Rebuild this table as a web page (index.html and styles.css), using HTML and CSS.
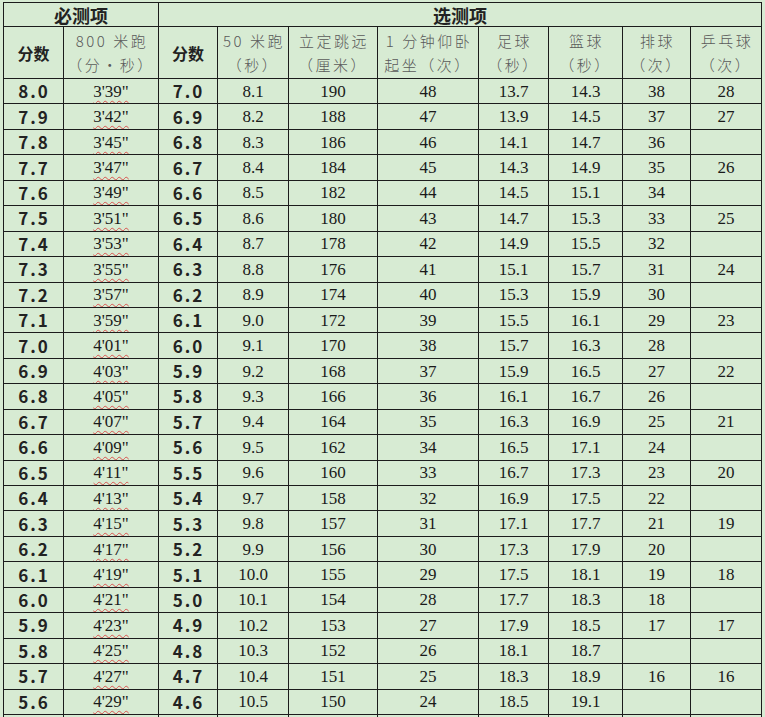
FILE: index.html
```html
<!DOCTYPE html>
<html lang="zh-CN">
<head>
<meta charset="utf-8">
<link rel="stylesheet" href="styles.css">
</head>
<body>
<table class="grid">
<colgroup>
<col class="c1"><col class="c2"><col class="c3"><col class="c4"><col class="c5"><col class="c6"><col class="c7"><col class="c8"><col class="c9"><col class="c10">
</colgroup>
<tr class="h1"><th colspan="2" class="grp">必测项</th><th colspan="8" class="grp">选测项</th></tr>
<tr class="h2">
<th class="sc">分数</th><th class="sub">800 米跑<br>（分•秒）</th>
<th class="sc">分数</th><th class="sub">50 米跑<br>（秒）</th><th class="sub">立定跳远<br>（厘米）</th><th class="sub">1 分钟仰卧<br>起坐（次）</th><th class="sub">足球<br>（秒）</th><th class="sub">篮球<br>（秒）</th><th class="sub">排球<br>（次）</th><th class="sub">乒乓球<br>（次）</th>
</tr>
<tr><td class="s">8.0</td><td><span class="sp">3'39"</span></td><td class="s">7.0</td><td>8.1</td><td>190</td><td>48</td><td>13.7</td><td>14.3</td><td>38</td><td>28</td></tr>
<tr><td class="s">7.9</td><td><span class="sp">3'42"</span></td><td class="s">6.9</td><td>8.2</td><td>188</td><td>47</td><td>13.9</td><td>14.5</td><td>37</td><td>27</td></tr>
<tr><td class="s">7.8</td><td><span class="sp">3'45"</span></td><td class="s">6.8</td><td>8.3</td><td>186</td><td>46</td><td>14.1</td><td>14.7</td><td>36</td><td></td></tr>
<tr><td class="s">7.7</td><td><span class="sp">3'47"</span></td><td class="s">6.7</td><td>8.4</td><td>184</td><td>45</td><td>14.3</td><td>14.9</td><td>35</td><td>26</td></tr>
<tr><td class="s">7.6</td><td><span class="sp">3'49"</span></td><td class="s">6.6</td><td>8.5</td><td>182</td><td>44</td><td>14.5</td><td>15.1</td><td>34</td><td></td></tr>
<tr><td class="s">7.5</td><td><span class="sp">3'51"</span></td><td class="s">6.5</td><td>8.6</td><td>180</td><td>43</td><td>14.7</td><td>15.3</td><td>33</td><td>25</td></tr>
<tr><td class="s">7.4</td><td><span class="sp">3'53"</span></td><td class="s">6.4</td><td>8.7</td><td>178</td><td>42</td><td>14.9</td><td>15.5</td><td>32</td><td></td></tr>
<tr><td class="s">7.3</td><td><span class="sp">3'55"</span></td><td class="s">6.3</td><td>8.8</td><td>176</td><td>41</td><td>15.1</td><td>15.7</td><td>31</td><td>24</td></tr>
<tr><td class="s">7.2</td><td><span class="sp">3'57"</span></td><td class="s">6.2</td><td>8.9</td><td>174</td><td>40</td><td>15.3</td><td>15.9</td><td>30</td><td></td></tr>
<tr><td class="s">7.1</td><td><span class="sp">3'59"</span></td><td class="s">6.1</td><td>9.0</td><td>172</td><td>39</td><td>15.5</td><td>16.1</td><td>29</td><td>23</td></tr>
<tr><td class="s">7.0</td><td><span class="sp">4'01"</span></td><td class="s">6.0</td><td>9.1</td><td>170</td><td>38</td><td>15.7</td><td>16.3</td><td>28</td><td></td></tr>
<tr><td class="s">6.9</td><td><span class="sp">4'03"</span></td><td class="s">5.9</td><td>9.2</td><td>168</td><td>37</td><td>15.9</td><td>16.5</td><td>27</td><td>22</td></tr>
<tr><td class="s">6.8</td><td><span class="sp">4'05"</span></td><td class="s">5.8</td><td>9.3</td><td>166</td><td>36</td><td>16.1</td><td>16.7</td><td>26</td><td></td></tr>
<tr><td class="s">6.7</td><td><span class="sp">4'07"</span></td><td class="s">5.7</td><td>9.4</td><td>164</td><td>35</td><td>16.3</td><td>16.9</td><td>25</td><td>21</td></tr>
<tr><td class="s">6.6</td><td><span class="sp">4'09"</span></td><td class="s">5.6</td><td>9.5</td><td>162</td><td>34</td><td>16.5</td><td>17.1</td><td>24</td><td></td></tr>
<tr><td class="s">6.5</td><td><span class="sp">4'11"</span></td><td class="s">5.5</td><td>9.6</td><td>160</td><td>33</td><td>16.7</td><td>17.3</td><td>23</td><td>20</td></tr>
<tr><td class="s">6.4</td><td><span class="sp">4'13"</span></td><td class="s">5.4</td><td>9.7</td><td>158</td><td>32</td><td>16.9</td><td>17.5</td><td>22</td><td></td></tr>
<tr><td class="s">6.3</td><td><span class="sp">4'15"</span></td><td class="s">5.3</td><td>9.8</td><td>157</td><td>31</td><td>17.1</td><td>17.7</td><td>21</td><td>19</td></tr>
<tr><td class="s">6.2</td><td><span class="sp">4'17"</span></td><td class="s">5.2</td><td>9.9</td><td>156</td><td>30</td><td>17.3</td><td>17.9</td><td>20</td><td></td></tr>
<tr><td class="s">6.1</td><td><span class="sp">4'19"</span></td><td class="s">5.1</td><td>10.0</td><td>155</td><td>29</td><td>17.5</td><td>18.1</td><td>19</td><td>18</td></tr>
<tr><td class="s">6.0</td><td><span class="sp">4'21"</span></td><td class="s">5.0</td><td>10.1</td><td>154</td><td>28</td><td>17.7</td><td>18.3</td><td>18</td><td></td></tr>
<tr><td class="s">5.9</td><td><span class="sp">4'23"</span></td><td class="s">4.9</td><td>10.2</td><td>153</td><td>27</td><td>17.9</td><td>18.5</td><td>17</td><td>17</td></tr>
<tr><td class="s">5.8</td><td><span class="sp">4'25"</span></td><td class="s">4.8</td><td>10.3</td><td>152</td><td>26</td><td>18.1</td><td>18.7</td><td></td><td></td></tr>
<tr><td class="s">5.7</td><td><span class="sp">4'27"</span></td><td class="s">4.7</td><td>10.4</td><td>151</td><td>25</td><td>18.3</td><td>18.9</td><td>16</td><td>16</td></tr>
<tr><td class="s">5.6</td><td><span class="sp">4'29"</span></td><td class="s">4.6</td><td>10.5</td><td>150</td><td>24</td><td>18.5</td><td>19.1</td><td></td><td></td></tr>
<tr class="tail"><td></td><td></td><td></td><td></td><td></td><td></td><td></td><td></td><td></td><td></td></tr>
</table>
</body>
</html>
```

FILE: styles.css
```css
html, body {
  margin: 0;
  padding: 0;
  background: #d7ebd3;
  overflow: hidden;
  height: 717px;
}

.grid {
  margin: 2px 0 0 3px;
  border-collapse: collapse;
  table-layout: fixed;
  width: 759px;
  background: #d7ebd3;
  font-family: "Liberation Serif", "Noto Sans CJK SC", serif;
  color: #1a1a1a;
}

.c1 { width: 60px; }
.c2 { width: 95px; }
.c3 { width: 59px; }
.c4 { width: 71px; }
.c5 { width: 89px; }
.c6 { width: 101px; }
.c7 { width: 70px; }
.c8 { width: 74px; }
.c9 { width: 68px; }
.c10 { width: 71px; }

.grid th,
.grid td {
  border: 1px solid #1c1c1c;
  padding: 0;
  text-align: center;
  vertical-align: middle;
  overflow: hidden;
  white-space: nowrap;
}

.h1 th {
  height: 23px;
}

.grp {
  font-family: "Noto Sans CJK SC", sans-serif;
  font-weight: 700;
  font-size: 18px;
  line-height: 20px;
  color: #222;
}

.h2 th {
  height: 51px;
}

.sc {
  font-family: "Noto Sans CJK SC", sans-serif;
  font-weight: 700;
  font-size: 16px;
  line-height: 20px;
  color: #222;
}

.sub {
  font-family: "Noto Sans CJK SC", sans-serif;
  font-weight: 300;
  font-size: 15px;
  line-height: 24px;
  letter-spacing: 2.5px;
  text-indent: 2px;
  color: #5a5a5a;
}

.grid td {
  height: 23.44px;
  padding-top: 1px;
  font-size: 17px;
  line-height: 18px;
}

.grid td.s {
  height: 24.44px;
  padding-top: 0;
  font-family: "Noto Sans CJK SC", sans-serif;
  font-weight: 700;
  font-size: 17px;
  line-height: 18px;
  letter-spacing: 2px;
  text-indent: 1px;
  color: #222;
}

.sp {
  text-decoration: underline wavy #d9534f;
  text-decoration-thickness: 1px;
  text-underline-offset: 3px;
}
```
